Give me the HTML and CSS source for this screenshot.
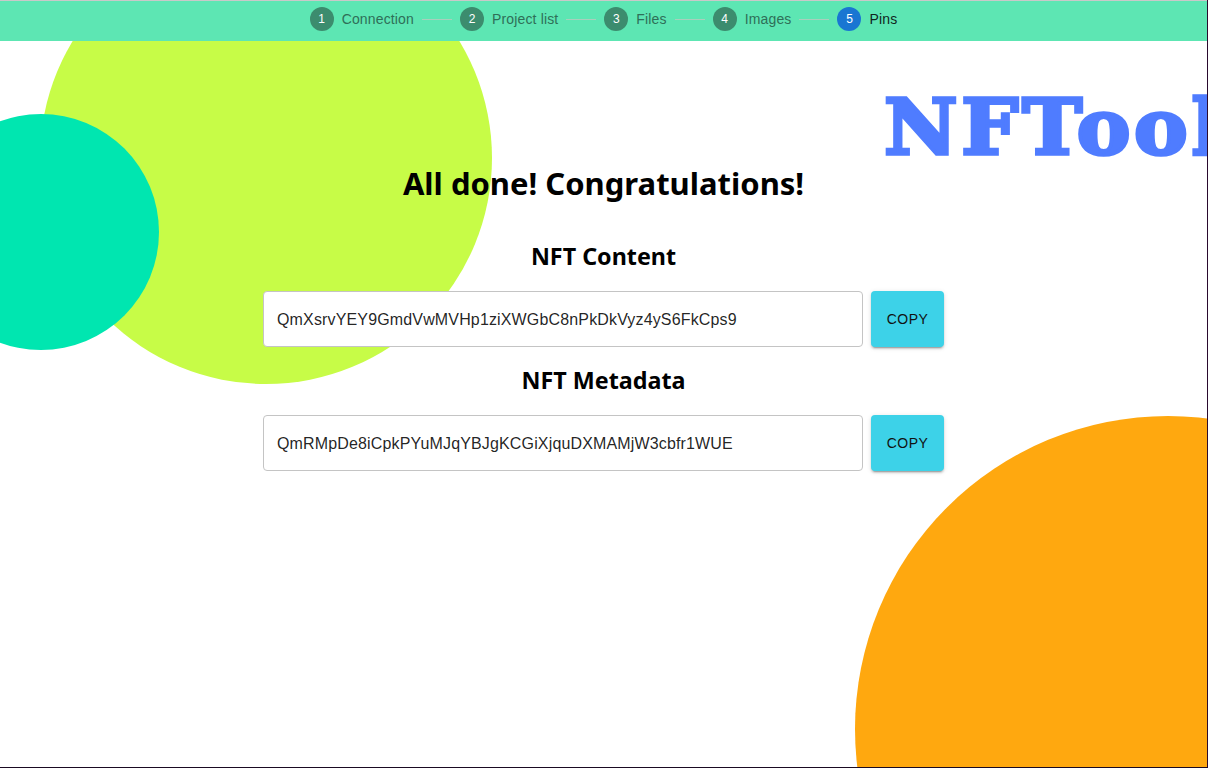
FILE: index.html
```html
<!DOCTYPE html>
<html lang="en">
<head>
    <meta charset="UTF-8">
    <meta name="viewport" content="width=device-width, initial-scale=1.0">
    <title>NFTools</title>
    <link rel="stylesheet" href="styles.css">
</head>
<body>
    <div class="page">
        <div class="circle circle-yellow"></div>
        <div class="circle circle-teal"></div>
        <div class="circle circle-orange"></div>

        <nav class="stepper">
            <div class="step"><span class="step-num">1</span><span class="step-label">Connection</span></div>
            <span class="step-line"></span>
            <div class="step"><span class="step-num">2</span><span class="step-label">Project list</span></div>
            <span class="step-line"></span>
            <div class="step"><span class="step-num">3</span><span class="step-label">Files</span></div>
            <span class="step-line"></span>
            <div class="step"><span class="step-num">4</span><span class="step-label">Images</span></div>
            <span class="step-line"></span>
            <div class="step active"><span class="step-num">5</span><span class="step-label">Pins</span></div>
        </nav>

        <div class="logo">NFTools</div>

        <main class="content">
            <h1>All done! Congratulations!</h1>

            <h2>NFT Content</h2>
            <div class="copy-row">
                <input class="hash-input" type="text" readonly value="QmXsrvYEY9GmdVwMVHp1ziXWGbC8nPkDkVyz4yS6FkCps9">
                <button class="copy-btn" type="button">Copy</button>
            </div>

            <h2>NFT Metadata</h2>
            <div class="copy-row">
                <input class="hash-input" type="text" readonly value="QmRMpDe8iCpkPYuMJqYBJgKCGiXjquDXMAMjW3cbfr1WUE">
                <button class="copy-btn" type="button">Copy</button>
            </div>
        </main>
    </div>
</body>
</html>
```

FILE: styles.css
```css
* {
    margin: 0;
    padding: 0;
    box-sizing: border-box;
}

body {
    background-color: #fff;
    font-family: 'Liberation Sans', sans-serif;
}

.page {
    position: relative;
    width: 1208px;
    height: 768px;
    overflow: hidden;
    background-color: #fff;
    border-right: 1px solid #2a0a2e;
    border-bottom: 1px solid #1a0a22;
}

/* background circles */
.circle {
    position: absolute;
    border-radius: 50%;
}

.circle-yellow {
    left: 40px;
    top: -68px;
    width: 452px;
    height: 452px;
    background-color: #c7fc47;
}

.circle-teal {
    left: -77px;
    top: 114px;
    width: 236px;
    height: 236px;
    background-color: #00e6b0;
}

.circle-orange {
    left: 855px;
    top: 416px;
    width: 626px;
    height: 626px;
    background-color: #ffa80f;
}

/* stepper */
.stepper {
    position: relative;
    display: flex;
    justify-content: center;
    align-items: center;
    height: 41px;
    padding-bottom: 4px;
    background-color: #5de6b3;
    border-top: 1px solid #c9c9c9;
}

.step {
    display: flex;
    align-items: center;
    gap: 8px;
}

.step-num {
    display: flex;
    justify-content: center;
    align-items: center;
    width: 24px;
    height: 24px;
    border-radius: 50%;
    background-color: #3c8c6e;
    color: #fff;
    font-size: 12px;
}

.step-label {
    font-size: 14px;
    letter-spacing: 0.15px;
    color: #2f6f58;
}

.step-line {
    width: 30px;
    height: 1px;
    margin: 0 8px;
    background-color: #a9cfbc;
}

.step.active .step-num {
    background-color: #1976d2;
}

.step.active .step-label {
    color: #10261e;
}

.logo {
    position: absolute;
    left: 884px;
    top: 80px;
    font-family: 'DejaVu Serif', serif;
    font-weight: 700;
    font-size: 76px;
    line-height: 96px;
    letter-spacing: 3.5px;
    white-space: nowrap;
    color: #4f7cff;
    -webkit-text-stroke: 3.5px #4f7cff;
    transform: scaleX(1.06);
    transform-origin: left center;
}

/* main column */
.content {
    position: relative;
    display: flex;
    flex-direction: column;
    align-items: center;
    padding-top: 122px;
}

h1 {
    font-family: 'Noto Sans', sans-serif;
    font-weight: 700;
    font-size: 31px;
    line-height: 40px;
    color: #000;
    margin-bottom: 38px;
}

h2 {
    font-family: 'Noto Sans', sans-serif;
    font-weight: 700;
    font-size: 23.3px;
    line-height: 30px;
    color: #000;
    margin-bottom: 20px;
}

.copy-row {
    display: flex;
    gap: 8px;
    margin-bottom: 18px;
}

.hash-input {
    width: 600px;
    height: 56px;
    padding: 1px 13px 0;
    font-family: 'Liberation Sans', sans-serif;
    font-size: 16px;
    letter-spacing: 0.15px;
    color: rgba(0, 0, 0, 0.87);
    background-color: #fff;
    border: 1px solid #c4c4c4;
    border-radius: 4px;
    outline: none;
}

.copy-btn {
    width: 73px;
    height: 56px;
    font-family: 'Liberation Sans', sans-serif;
    font-size: 14px;
    font-weight: 400;
    letter-spacing: 0.4px;
    text-transform: uppercase;
    color: #111;
    background-color: #3dd2e8;
    border: none;
    border-radius: 4px;
    box-shadow: 0 3px 1px -2px rgba(0, 0, 0, 0.2), 0 2px 2px 0 rgba(0, 0, 0, 0.14), 0 1px 5px 0 rgba(0, 0, 0, 0.12);
    cursor: pointer;
}
```
